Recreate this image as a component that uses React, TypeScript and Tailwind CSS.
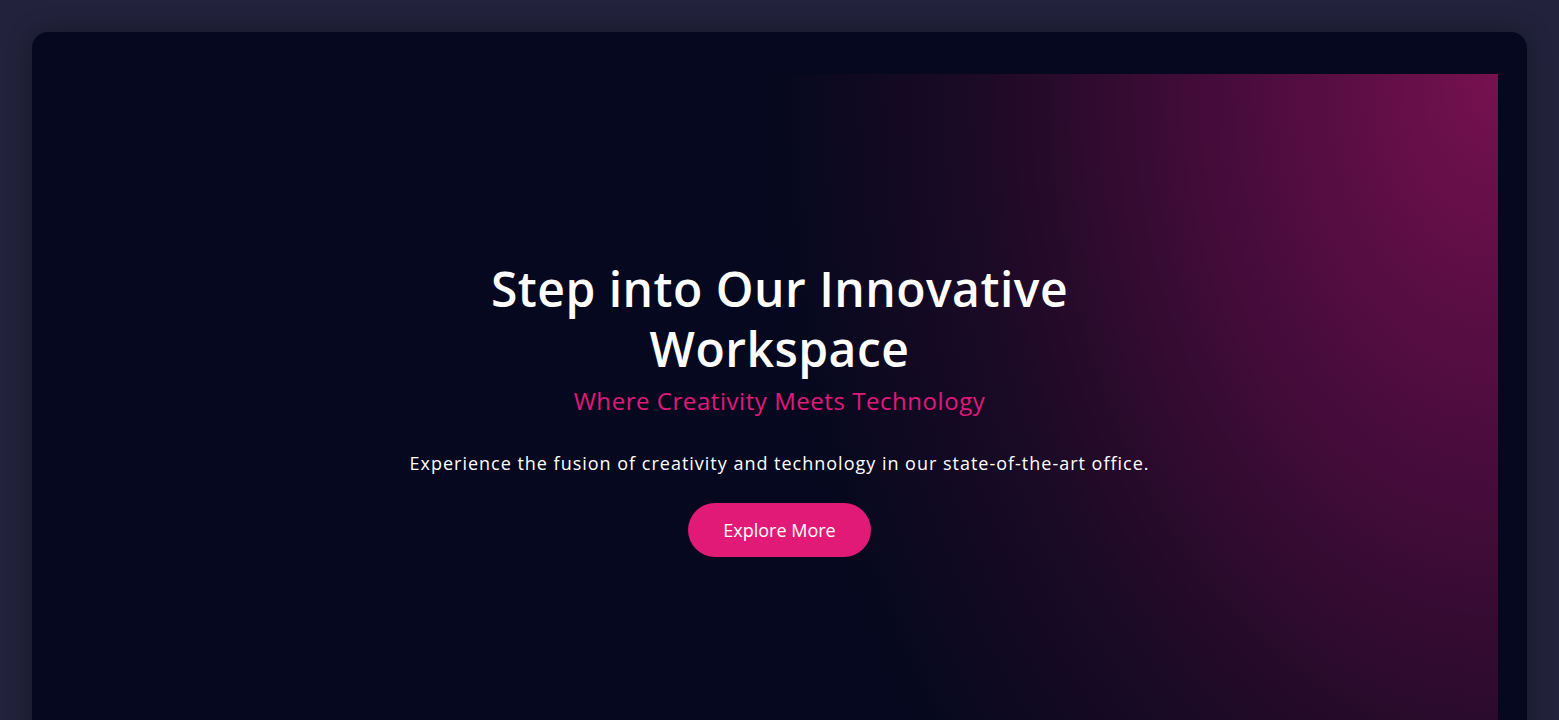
export default function App() {
  return (
    <main className="min-h-screen bg-[#22223d] p-8 font-['Open_Sans',sans-serif]">
      <section className="rounded-2xl bg-[#05081e] px-[29px] pt-[42px] pb-[42px] shadow-[0_0_24px_rgba(0,0,0,0.35)]">
        {/* Hero panel with magenta glow from the top right */}
        <div className="flex h-[670px] flex-col items-center justify-center pb-[2px] bg-[radial-gradient(ellipse_730px_1080px_at_top_right,#76114f_0%,#4a0c3d_35%,#1d0a26_70%,transparent_100%)] text-center">
          <h1 className="max-w-[640px] text-5xl leading-[60px] font-semibold tracking-[0.01em] text-white">
            Step into Our Innovative Workspace
          </h1>
          <p className="mt-[6px] text-2xl tracking-[0.023em] text-[#e0197a]">Where Creativity Meets Technology</p>
          <p className="mt-8 text-lg tracking-[0.055em] text-white">
            Experience the fusion of creativity and technology in our state-of-the-art office.
          </p>
          <a
            href="#"
            className="mt-[26px] flex h-[54px] w-[183px] items-center justify-center rounded-full bg-[#e11a77] text-lg text-white"
          >
            Explore More
          </a>
        </div>
      </section>
    </main>
  );
}
